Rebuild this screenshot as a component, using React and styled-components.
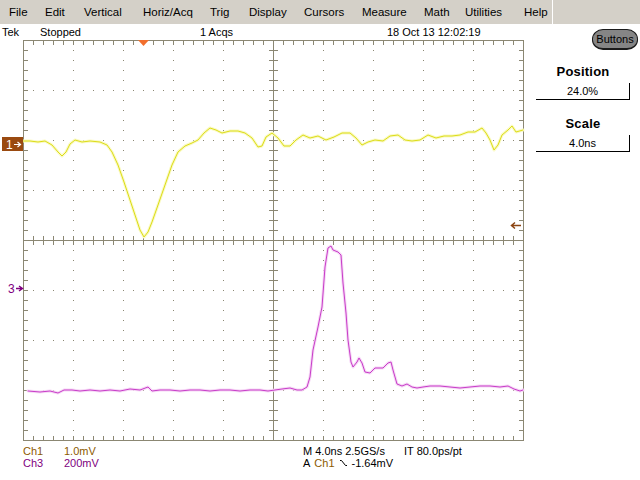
import React from "react";
import styled, { createGlobalStyle } from "styled-components";

const GlobalStyle = createGlobalStyle`
  html, body {
    margin: 0;
    padding: 0;
    background: #ffffff;
  }
`;

const GRID = "#8b8773";
const CH1 = "#8c5a00";
const CH3 = "#800080";

const Page = styled.div`
  width: 640px;
  height: 480px;
  overflow: hidden;
  background: #ffffff;
  font-family: "Liberation Sans", Arial, sans-serif;
  font-size: 11px;
  color: #000;
`;

const MenuBar = styled.div`
  height: 24px;
  background: #d4d0c8;
  display: grid;
  grid-template-columns: ${(p) => p.cols};
  align-items: center;
  padding-left: 9px;
  font-size: 11.5px;
`;

const MenuItem = styled.div`
  white-space: nowrap;
`;

const MenuSeparator = styled.div`
  align-self: stretch;
  border-left: 1px solid #ffffff;
`;

const Body = styled.div`
  display: grid;
  grid-template-columns: 530px 110px;
`;

const ScopeColumn = styled.div`
  display: flex;
  flex-direction: column;
`;

const StatusLine = styled.div`
  height: 16px;
  display: grid;
  grid-template-columns: 38px 160px 187px auto;
  align-items: center;
  padding-left: 2px;
  white-space: nowrap;
`;

const Screen = styled.svg`
  display: block;
  width: 530px;
  height: 402px;
`;

const Readouts = styled.div`
  display: grid;
  grid-template-columns: 41px 239px 101px auto;
  grid-auto-rows: 12px;
  padding: 3px 0 0 23px;
  line-height: 12px;
  white-space: nowrap;
`;

const Cell = styled.div`
  color: ${(p) => p.$color || "#000"};
  display: flex;
  align-items: center;
  gap: ${(p) => (p.$gap ? p.$gap : 0)};
`;

const Colored = styled.span`
  color: ${(p) => p.$color};
`;

const SidePanel = styled.div`
  display: flex;
  flex-direction: column;
  padding-top: 5px;
`;

const PillButton = styled.button`
  align-self: flex-end;
  margin-right: 2px;
  width: 46px;
  height: 21px;
  padding: 0 0 1px;
  border: 1px solid #1a1a1a;
  border-bottom-width: 2px;
  border-radius: 11px / 10px;
  background: #858585;
  color: #000;
  font-family: inherit;
  font-size: 11px;
`;

const Control = styled.div`
  display: flex;
  flex-direction: column;
  align-items: center;
  margin: ${(p) => p.$top}px 10px 0 6px;
`;

const ControlLabel = styled.div`
  font-weight: bold;
  font-size: 13px;
  line-height: 16px;
  letter-spacing: 0.2px;
`;

const ControlValue = styled.div`
  align-self: stretch;
  height: 16px;
  margin-top: 3px;
  border-right: 1px solid #000;
  border-bottom: 1px solid #000;
  display: flex;
  align-items: center;
  justify-content: center;
  font-size: 11px;
`;

const menuItems = [
  { label: "File", w: 36 },
  { label: "Edit", w: 39 },
  { label: "Vertical", w: 59 },
  { label: "Horiz/Acq", w: 67 },
  { label: "Trig", w: 39 },
  { label: "Display", w: 55 },
  { label: "Cursors", w: 58 },
  { label: "Measure", w: 62 },
  { label: "Math", w: 41 },
  { label: "Utilities", w: 59 },
  { label: "Help", w: 28 },
];

const yellow = [
  [23, 141], [30, 141], [38, 142], [45, 141], [52, 145], [58, 152], [62, 156], [66, 152],
  [70, 144], [75, 140], [82, 142], [90, 141], [100, 142], [107, 145], [112, 152], [118, 165],
  [124, 182], [130, 200], [135, 215], [140, 230], [144, 237], [148, 232], [152, 222], [158, 205],
  [165, 185], [172, 165], [178, 152], [185, 146], [192, 143], [198, 140], [204, 133], [210, 128],
  [216, 130], [222, 133], [230, 131], [238, 131], [245, 133], [252, 138], [258, 147], [262, 146],
  [266, 137], [272, 133], [278, 138], [284, 146], [290, 146], [296, 140], [303, 135], [310, 138],
  [318, 136], [326, 140], [334, 137], [342, 133], [350, 133], [356, 138], [362, 145], [368, 142],
  [375, 140], [383, 141], [390, 136], [398, 135], [405, 140], [412, 141], [420, 140], [428, 135],
  [436, 138], [444, 136], [452, 136], [460, 135], [468, 132], [475, 132], [482, 128], [486, 133],
  [490, 140], [494, 150], [498, 145], [502, 135], [508, 130], [512, 126], [516, 132], [523, 130],
];

const magenta = [
  [28, 391], [40, 392], [50, 391], [58, 393], [64, 390], [72, 390], [80, 391], [90, 390],
  [100, 391], [110, 390], [120, 391], [130, 389], [140, 390], [148, 387], [152, 391], [160, 390],
  [170, 390], [180, 391], [190, 390], [200, 390], [210, 391], [220, 390], [230, 390], [240, 391],
  [250, 390], [260, 390], [268, 391], [275, 390], [282, 389], [290, 388], [297, 390], [302, 390],
  [307, 387], [310, 377], [313, 350], [318, 327], [322, 307], [325, 267], [328, 248], [331, 246],
  [333, 250], [338, 252], [341, 255], [343, 283], [346, 313], [348, 340], [351, 362], [353, 367],
  [357, 362], [359, 358], [362, 363], [365, 372], [370, 373], [375, 368], [383, 368], [388, 363],
  [391, 362], [393, 370], [397, 384], [402, 386], [407, 384], [412, 387], [417, 388], [423, 387],
  [430, 386], [440, 386], [450, 387], [460, 388], [470, 387], [480, 386], [490, 386], [500, 387],
  [508, 386], [514, 389], [520, 391], [523, 390],
];

const pts = (arr) => arr.map(([x, y]) => `${x},${y}`).join(" ");

const range = (n) => Array.from({ length: n }, (_, i) => i);

const Graticule = () => {
  const x0 = 23;
  const y0 = 40;
  const cx = 273;
  const cy = 240;
  return (
    <g stroke={GRID} strokeWidth="1" fill="none" shapeRendering="crispEdges">
      <rect x={x0 + 0.5} y={y0 + 0.5} width={500} height={400} />
      {range(9).map((i) => {
        const x = x0 + 50 * (i + 1);
        if (x === cx) return null;
        return (
          <line key={"v" + i} x1={x + 0.5} y1={y0} x2={x + 0.5} y2={y0 + 400} strokeDasharray="1 9" />
        );
      })}
      {range(7).map((i) => {
        const y = y0 + 50 * (i + 1);
        if (y === cy) return null;
        return (
          <line key={"h" + i} x1={x0} y1={y + 0.5} x2={x0 + 500} y2={y + 0.5} strokeDasharray="1 9" />
        );
      })}
      <line x1={cx + 0.5} y1={y0} x2={cx + 0.5} y2={y0 + 400} />
      <line x1={x0} y1={cy + 0.5} x2={x0 + 500} y2={cy + 0.5} />
      {range(49).map((i) => {
        const x = x0 + 10 * (i + 1) + 0.5;
        return (
          <g key={"tx" + i}>
            <line x1={x} y1={y0} x2={x} y2={y0 + 5} />
            <line x1={x} y1={y0 + 396} x2={x} y2={y0 + 400} />
            <line x1={x} y1={cy - 4} x2={x} y2={cy + 5} />
          </g>
        );
      })}
      {range(39).map((i) => {
        const y = y0 + 10 * (i + 1) + 0.5;
        return (
          <g key={"ty" + i}>
            <line x1={x0} y1={y} x2={x0 + 5} y2={y} />
            <line x1={x0 + 496} y1={y} x2={x0 + 500} y2={y} />
            <line x1={cx - 4} y1={y} x2={cx + 5} y2={y} />
          </g>
        );
      })}
    </g>
  );
};

const Trace = ({ points, color, glow }) => (
  <g fill="none" strokeLinejoin="round" strokeLinecap="round">
    <polyline points={pts(points)} stroke={glow} strokeWidth="3" />
    <polyline points={pts(points)} stroke={color} strokeWidth="1" />
  </g>
);

const SlopeIcon = () => (
  <svg width="9" height="8" viewBox="0 0 9 8">
    <path d="M1 1.5 H2.5 L6.5 6.5 H8" fill="none" stroke="#000" strokeWidth="1" />
  </svg>
);

export default function App() {
  return (
    <Page>
      <GlobalStyle />
      <MenuBar cols={menuItems.map((m) => m.w + "px").join(" ") + " auto"}>
        {menuItems.map((m) => (
          <MenuItem key={m.label}>{m.label}</MenuItem>
        ))}
        <MenuSeparator />
      </MenuBar>
      <Body>
        <ScopeColumn>
          <StatusLine>
            <span>Tek</span>
            <span>Stopped</span>
            <span>1 Acqs</span>
            <span>18 Oct 13 12:02:19</span>
          </StatusLine>
          <Screen viewBox="0 40 530 402">
            <Graticule />
            <Trace points={yellow} color="#dcdc18" glow="#fafac4" />
            <Trace points={magenta} color="#c83cc8" glow="#f6d8f6" />
            <polygon points="138,40 149,40 143.5,46" fill="#f26f2e" />
            <rect x="2" y="137" width="21" height="14" fill="#9a4a10" />
            <text x="6" y="148.5" fill="#fff" fontSize="12" fontFamily="Liberation Sans, Arial, sans-serif">
              1
            </text>
            <path d="M14 144.5 H20 M17.5 142 L20.5 144.5 L17.5 147" stroke="#fff" strokeWidth="1.2" fill="none" />
            <text x="8" y="293" fill={CH3} fontSize="12" fontFamily="Liberation Sans, Arial, sans-serif">
              3
            </text>
            <path d="M16 288.5 H22 M19 286 L22.5 288.5 L19 291" stroke={CH3} strokeWidth="1.4" fill="none" />
            <path d="M512 225.5 H521 M515 222.5 L511.5 225.5 L515 228.5" stroke="#8b4513" strokeWidth="1.5" fill="none" />
          </Screen>
          <Readouts>
            <Cell $color={CH1}>Ch1</Cell>
            <Cell $color={CH1}>1.0mV</Cell>
            <Cell>M 4.0ns 2.5GS/s</Cell>
            <Cell>IT 80.0ps/pt</Cell>
            <Cell $color={CH3}>Ch3</Cell>
            <Cell $color={CH3}>200mV</Cell>
            <Cell $gap="4px">
              A <Colored $color={CH1}>Ch1</Colored> <SlopeIcon /> -1.64mV
            </Cell>
            <Cell />
          </Readouts>
        </ScopeColumn>
        <SidePanel>
          <PillButton>Buttons</PillButton>
          <Control $top={14}>
            <ControlLabel>Position</ControlLabel>
            <ControlValue>24.0%</ControlValue>
          </Control>
          <Control $top={16}>
            <ControlLabel>Scale</ControlLabel>
            <ControlValue>4.0ns</ControlValue>
          </Control>
        </SidePanel>
      </Body>
    </Page>
  );
}
